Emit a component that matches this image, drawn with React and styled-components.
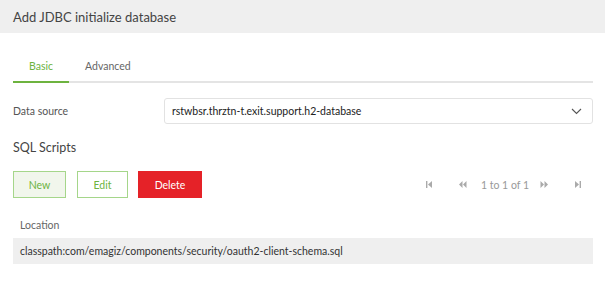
import React from "react";
import styled, { createGlobalStyle } from "styled-components";

const GlobalStyle = createGlobalStyle`
  body {
    margin: 0;
    background: #ffffff;
    font-family: Lato, "Open Sans", sans-serif;
    color: #333333;
  }
`;

const Page = styled.div`
  width: 605px;
  height: 292px;
  background: #ffffff;
  overflow: hidden;
`;

const Header = styled.div`
  height: 33px;
  background: #efefef;
  display: flex;
  align-items: center;
  padding-left: 13px;
  font-size: 13px;
  color: #444444;
`;

const Body = styled.div`
  width: 580px;
  padding: 23px 0 0 13px;
`;

const Tabs = styled.div`
  display: flex;
  border-bottom: 2px solid #e4e4e4;
`;

const Tab = styled.div`
  padding: 3px 16px 7px;
  line-height: 15px;
  font-size: 10.5px;
  color: ${(p) => (p.active ? "#6db33f" : "#666666")};
  margin-bottom: -2px;
  border-bottom: 2px solid ${(p) => (p.active ? "#6db33f" : "transparent")};
`;

const FieldRow = styled.div`
  display: flex;
  align-items: center;
  margin-top: 15px;
`;

const Label = styled.div`
  width: 151px;
  font-size: 10.5px;
  color: #555555;
`;

const Select = styled.div`
  flex: 1;
  height: 26px;
  box-sizing: border-box;
  border: 1px solid #e2e2e2;
  border-radius: 3px;
  display: flex;
  align-items: center;
  justify-content: space-between;
  padding: 0 10px 0 7px;
  font-size: 10.5px;
  color: #222222;
`;

const SectionTitle = styled.div`
  margin-top: 14px;
  line-height: 19px;
  font-size: 12.5px;
  color: #444444;
`;

const Toolbar = styled.div`
  display: flex;
  align-items: center;
  margin-top: 14px;
`;

const Button = styled.button`
  height: 27px;
  width: ${(p) => p.w}px;
  margin-right: ${(p) => p.gap}px;
  box-sizing: border-box;
  font-family: inherit;
  font-size: 10.5px;
  border: 1px solid ${(p) => (p.danger ? "#e52228" : "#a5d68a")};
  background: ${(p) => (p.danger ? "#e52228" : p.filled ? "#f1f6ec" : "#ffffff")};
  color: ${(p) => (p.danger ? "#ffffff" : "#6db33f")};
  padding: 0;
`;

const Pager = styled.div`
  margin-left: auto;
  display: flex;
  align-items: center;
  font-size: 10.5px;
  color: #999999;
`;

const PagerIcon = styled.svg`
  width: 9px;
  height: 9px;
`;

const Spacer = styled.span`
  width: ${(p) => p.w}px;
`;

const PageText = styled.span`
  margin: 0 11px 0 14px;
`;

const Table = styled.div`
  margin-top: 17px;
`;

const HeadCell = styled.div`
  padding: 0 7px;
  height: 20px;
  display: flex;
  align-items: center;
  font-size: 10.5px;
  color: #666666;
`;

const Row = styled.div`
  height: 26px;
  margin-top: 3px;
  background: #efefef;
  display: flex;
  align-items: center;
  padding: 0 7px;
  font-size: 10.5px;
  color: #333333;
`;

const Chevron = () => (
  <svg width="11" height="7" viewBox="0 0 11 7">
    <path d="M1 1l4.5 4.5L10 1" fill="none" stroke="#555" strokeWidth="1.1" />
  </svg>
);

const First = () => (
  <PagerIcon viewBox="0 0 9 9">
    <rect x="1" y="1" width="1.4" height="7" fill="#aaa" />
    <path d="M7 1v7L3 4.5z" fill="#aaa" />
  </PagerIcon>
);
const Prev = () => (
  <PagerIcon viewBox="0 0 9 9">
    <path d="M4.5 1v7L1 4.5zM8.5 1v7L5 4.5z" fill="#aaa" />
  </PagerIcon>
);
const Next = () => (
  <PagerIcon viewBox="0 0 9 9">
    <path d="M0.5 1v7L4 4.5zM4.5 1v7L8 4.5z" fill="#aaa" />
  </PagerIcon>
);
const Last = () => (
  <PagerIcon viewBox="0 0 9 9">
    <path d="M2 1v7L6 4.5z" fill="#aaa" />
    <rect x="6.6" y="1" width="1.4" height="7" fill="#aaa" />
  </PagerIcon>
);

export default function App() {
  return (
    <Page>
      <GlobalStyle />
      <Header>Add JDBC initialize database</Header>
      <Body>
        <Tabs>
          <Tab active>Basic</Tab>
          <Tab>Advanced</Tab>
        </Tabs>
        <FieldRow>
          <Label>Data source</Label>
          <Select>
            rstwbsr.thrztn-t.exit.support.h2-database
            <Chevron />
          </Select>
        </FieldRow>
        <SectionTitle>SQL Scripts</SectionTitle>
        <Toolbar>
          <Button filled w={53} gap={11}>New</Button>
          <Button w={51} gap={10}>Edit</Button>
          <Button danger w={64} gap={0}>Delete</Button>
          <Pager>
            <First />
            <Spacer w={24} />
            <Prev />
            <PageText>1 to 1 of 1</PageText>
            <Next />
            <Spacer w={24} />
            <Last />
            <Spacer w={11} />
          </Pager>
        </Toolbar>
        <Table>
          <HeadCell>Location</HeadCell>
          <Row>classpath:com/emagiz/components/security/oauth2-client-schema.sql</Row>
        </Table>
      </Body>
    </Page>
  );
}
